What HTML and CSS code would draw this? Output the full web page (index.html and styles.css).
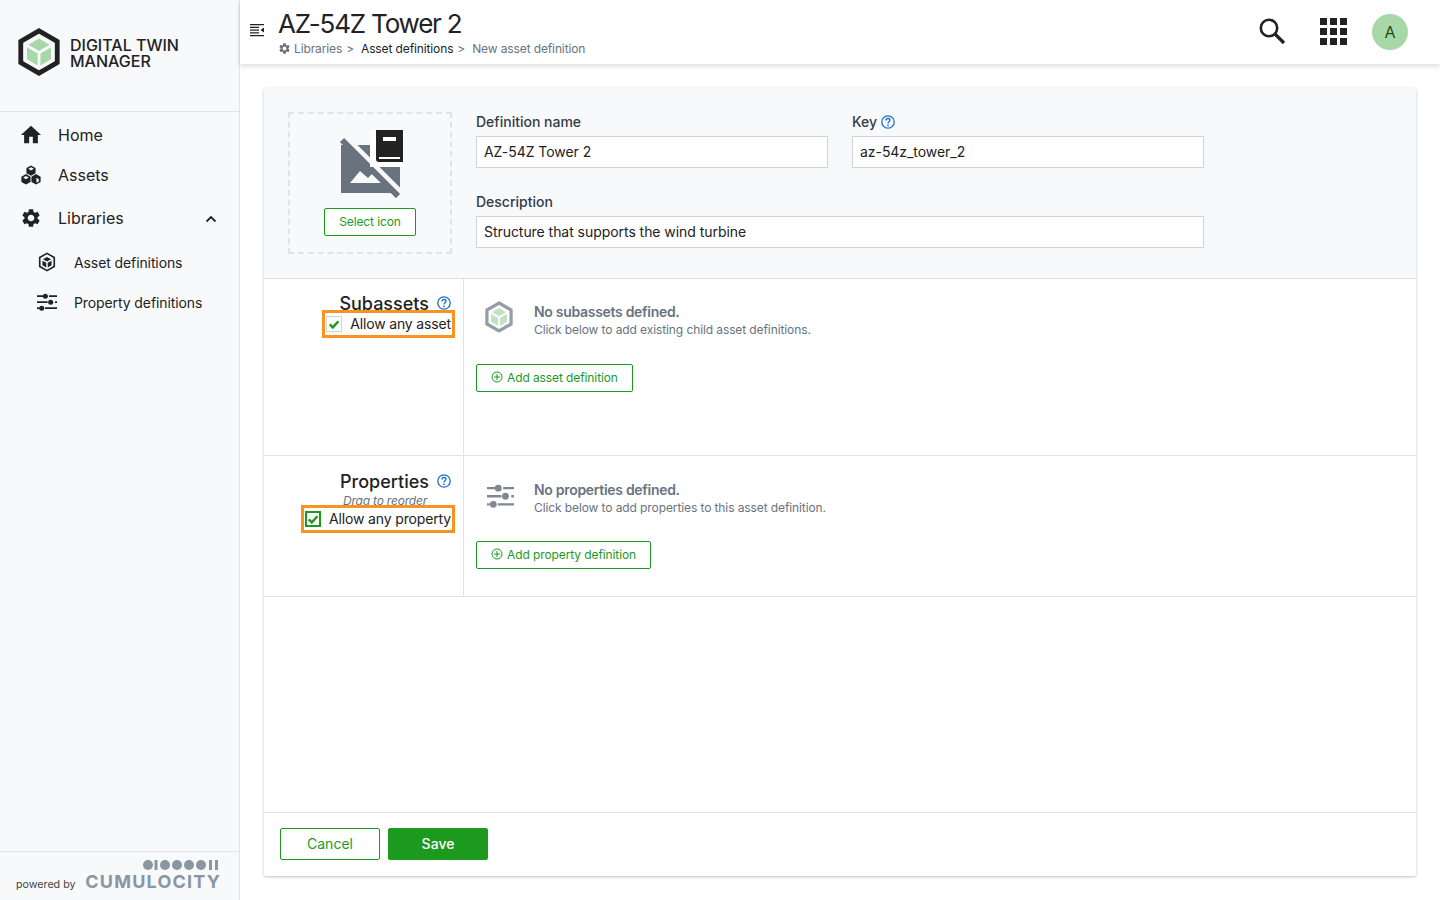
FILE: index.html
```html
<!DOCTYPE html>
<html lang="en">
<head>
    <meta charset="UTF-8">
    <title>New asset definition - Digital Twin Manager</title>
    <link rel="stylesheet" href="styles.css">
</head>
<body>
    <svg class="icon-defs" xmlns="http://www.w3.org/2000/svg">
        <symbol id="i-gear" viewBox="0 0 24 24"><path d="M19.14 12.94c.04-.3.06-.61.06-.94 0-.32-.02-.64-.07-.94l2.03-1.58c.18-.14.23-.41.12-.61l-1.92-3.32c-.12-.22-.37-.29-.59-.22l-2.39.96c-.5-.38-1.03-.7-1.62-.94l-.36-2.54c-.04-.24-.24-.41-.48-.41h-3.84c-.24 0-.43.17-.47.41l-.36 2.54c-.59.24-1.13.57-1.62.94l-2.39-.96c-.22-.08-.47 0-.59.22L2.74 8.87c-.12.21-.08.47.12.61l2.03 1.58c-.05.3-.09.63-.09.94s.02.64.07.94l-2.03 1.58c-.18.14-.23.41-.12.61l1.92 3.32c.12.22.37.29.59.22l2.39-.96c.5.38 1.03.7 1.62.94l.36 2.54c.05.24.24.41.48.41h3.84c.24 0 .44-.17.47-.41l.36-2.54c.59-.24 1.13-.56 1.62-.94l2.39.96c.22.08.47 0 .59-.22l1.92-3.32c.12-.22.07-.47-.12-.61l-2.01-1.58zM12 15.6c-1.98 0-3.6-1.62-3.6-3.6s1.62-3.6 3.6-3.6 3.6 1.62 3.6 3.6-1.62 3.6-3.6 3.6z"/></symbol>
        <symbol id="i-sliders" viewBox="0 0 30 30">
            <path d="M0 5h9v2.600H0zM18 5h12v2.600H18zM0 14h16v2.600H0zM27 14h3v2.600h-3zM0 23h3v2.600H0zM12 23h18v2.600H12z"/>
            <circle cx="12.500" cy="6.300" r="3.800"/><circle cx="20.500" cy="15.300" r="3.800"/><circle cx="7" cy="24.300" r="3.800"/>
        </symbol>
        <symbol id="i-help" viewBox="0 0 14 14">
            <circle cx="7" cy="7" r="6.200" fill="none" stroke="currentColor" stroke-width="1.300"/>
            <path d="M5 5.400C5 4.200 5.900 3.500 7 3.500s2 .7 2 1.800c0 1.500-2 1.600-2 3.100" fill="none" stroke="currentColor" stroke-width="1.300"/>
            <circle cx="7" cy="10.300" r=".9" fill="currentColor"/>
        </symbol>
        <symbol id="i-plus" viewBox="0 0 12 12">
            <circle cx="6" cy="6" r="5" fill="none" stroke="currentColor"/>
            <path d="M6 3v6M3 6h6" fill="none" stroke="currentColor"/>
        </symbol>
        <symbol id="i-check" viewBox="0 0 12 12">
            <path d="M1.800 6.400 4.800 9.400 10.400 3.200" fill="none" stroke="currentColor" stroke-width="2.400"/>
        </symbol>
        <symbol id="i-cube" viewBox="0 0 44 50">
            <path d="M22 3 41 14v22L22 47 3 36V14z" fill="none" stroke="currentColor" stroke-width="5"/>
            <path d="M22 11 33 17.500 22 24 11 17.500z" fill="#a8d8a8"/>
            <path d="M9.500 20 20.500 26.500V39L9.500 32.500z" fill="#a8d8a8"/>
            <path d="M34.500 20V32.500L23.500 39V26.500z" fill="#a8d8a8"/>
        </symbol>
    </svg>

    <div class="app">
        <aside class="sidebar">
            <div class="brand">
                <svg class="brand-logo"><use href="#i-cube"/></svg>
                <div class="brand-name">DIGITAL TWIN<br>MANAGER</div>
            </div>
            <nav class="nav">
                <a class="nav-item">
                    <svg class="nav-icon" viewBox="0 0 24 24"><path d="M10 21v-7h4v7h5.500v-9H23L12 2 1 12h3.500v9z"/></svg>
                    Home
                </a>
                <a class="nav-item">
                    <svg class="nav-icon" viewBox="0 0 24 24">
                        <path d="M12 1.500 17 4.300V10L12 12.800 7 10V4.300z"/>
                        <path d="M6.500 11 11.500 13.800V19.500L6.500 22.300 1.500 19.500V13.800z"/>
                        <path d="M17.500 11 22.500 13.800V19.500L17.500 22.300 12.500 19.500V13.800z"/>
                        <path d="M12 3.500 15 5.200 12 7 9 5.200zM6.500 13 9.500 14.700 6.500 16.500 3.500 14.700zM17.500 15 20.500 16.700V19.200L18 20.500V16.500z" fill="#fff"/>
                    </svg>
                    Assets
                </a>
                <a class="nav-item nav-open">
                    <svg class="nav-icon"><use href="#i-gear"/></svg>
                    Libraries
                    <svg class="nav-caret" viewBox="0 0 12 8"><path d="M1.500 6.500 6 2l4.500 4.500" fill="none" stroke="currentColor" stroke-width="1.800"/></svg>
                </a>
                <a class="nav-sub">
                    <svg class="sub-icon" viewBox="0 0 20 22">
                        <path d="M10 1.500 18 6v10l-8 4.500L2 16V6z" fill="none" stroke="currentColor" stroke-width="1.800"/>
                        <path d="M10 5.500 14.500 8 10 10.500 5.500 8zM5 9.500l4.200 2.300V17L5 14.600zM15 9.500v5.100L10.800 17v-5.200z"/>
                    </svg>
                    Asset definitions
                </a>
                <a class="nav-sub">
                    <svg class="sub-icon"><use href="#i-sliders"/></svg>
                    Property definitions
                </a>
            </nav>
            <div class="powered">
                <span class="powered-by">powered by</span>
                <div class="c8y">
                    <svg class="c8y-dots" viewBox="0 0 78 12">
                        <circle cx="6" cy="6" r="5"/><rect x="12.500" y="1" width="3" height="10"/>
                        <circle cx="23" cy="6" r="5"/><circle cx="35" cy="6" r="5"/><circle cx="47" cy="6" r="5"/><circle cx="59" cy="6" r="5"/>
                        <rect x="67" y="1" width="3" height="10"/><rect x="73" y="1" width="3" height="10"/>
                    </svg>
                    <div class="c8y-name">CUMULOCITY</div>
                </div>
            </div>
        </aside>

        <div class="content">
            <header class="topbar">
                <svg class="toggle" viewBox="0 0 14 14"><path d="M0 1h14v1.200H0zM0 3.800h9V5H0zM0 6.500h9v1.200H0zM0 9.200h9v1.200H0zM0 12h14v1.200H0zM14 4.500v5L10.500 7z"/></svg>
                <div class="title-block">
                    <h1>AZ-54Z Tower 2</h1>
                    <div class="crumbs">
                        <svg class="crumb-gear"><use href="#i-gear"/></svg>
                        <span>Libraries</span><i>&gt;</i>
                        <span class="crumb-dark">Asset definitions</span><i>&gt;</i>
                        <span>New asset definition</span>
                    </div>
                </div>
                <div class="top-actions">
                    <svg class="top-search" viewBox="0 0 28 28"><circle cx="11" cy="11" r="8.200" fill="none" stroke="currentColor" stroke-width="2.600"/><path d="M17 17l9 9" stroke="currentColor" stroke-width="3.200"/></svg>
                    <div class="app-grid"><b></b><b></b><b></b><b></b><b></b><b></b><b></b><b></b><b></b></div>
                    <div class="avatar">A</div>
                </div>
            </header>

            <main class="main">
                <form class="card">
                    <section class="card-head">
                        <div class="icon-box">
                            <svg class="no-image" viewBox="336 128 68 70">
                                <rect x="341" y="145" width="59" height="48" fill="#68737f"/>
                                <path d="M350 183 360 171 368 178 372 174 382 183z" fill="#f8f9fb"/>
                                <path d="M346 137 403 194" stroke="#f8f9fb" stroke-width="5"/>
                                <path d="M342 140 398 196" stroke="#68737f" stroke-width="6"/>
                                <rect x="370" y="130" width="34" height="37" fill="#fff"/>
                                <path d="M376 130h27v32h-24a3 3 0 0 1-3-3z" fill="#222"/>
                                <path d="M383 137h13v4h-13zM379 157h21v2h-21z" fill="#fff"/>
                            </svg>
                            <button type="button" class="btn btn-small btn-icon">Select icon</button>
                        </div>
                        <div class="head-fields">
                            <div class="field">
                                <label>Definition name</label>
                                <input type="text" value="AZ-54Z Tower 2">
                            </div>
                            <div class="field">
                                <label>Key<svg class="help"><use href="#i-help"/></svg></label>
                                <input type="text" value="az-54z_tower_2">
                            </div>
                            <div class="field field-wide">
                                <label>Description</label>
                                <input type="text" value="Structure that supports the wind turbine">
                            </div>
                        </div>
                    </section>

                    <section class="row row-subassets">
                        <div class="row-side">
                            <h2>Subassets<svg class="help"><use href="#i-help"/></svg></h2>
                            <label class="allow allow-asset">
                                <span class="check"><svg><use href="#i-check"/></svg></span>
                                Allow any asset
                            </label>
                        </div>
                        <div class="row-body">
                            <div class="empty">
                                <svg class="empty-icon empty-cube"><use href="#i-cube"/></svg>
                                <div class="empty-copy">
                                    <p class="empty-title">No subassets defined.</p>
                                    <p class="empty-text">Click below to add existing child asset definitions.</p>
                                </div>
                            </div>
                            <button type="button" class="btn btn-small btn-add"><svg><use href="#i-plus"/></svg>Add asset definition</button>
                        </div>
                    </section>

                    <section class="row row-properties">
                        <div class="row-side">
                            <h2>Properties<svg class="help"><use href="#i-help"/></svg></h2>
                            <div class="drag-hint">Drag to reorder</div>
                            <label class="allow allow-property">
                                <span class="check check-on"><svg><use href="#i-check"/></svg></span>
                                Allow any property
                            </label>
                        </div>
                        <div class="row-body">
                            <div class="empty">
                                <svg class="empty-icon empty-sliders"><use href="#i-sliders"/></svg>
                                <div class="empty-copy">
                                    <p class="empty-title">No properties defined.</p>
                                    <p class="empty-text">Click below to add properties to this asset definition.</p>
                                </div>
                            </div>
                            <button type="button" class="btn btn-small btn-add"><svg><use href="#i-plus"/></svg>Add property definition</button>
                        </div>
                    </section>

                    <div class="spacer"></div>

                    <footer class="card-foot">
                        <button type="button" class="btn btn-large">Cancel</button>
                        <button type="button" class="btn btn-large btn-primary">Save</button>
                    </footer>
                </form>
            </main>
        </div>
    </div>
</body>
</html>
```

FILE: styles.css
```css
:root {
    --green: #1c9a1e;
    --ink: #222;
    --slate: #68737f;
    --line: #e1e3e6;
    --panel: #f8f9fb;
    --help: #1a6fc9;
}

* {
    box-sizing: border-box;
}

html,
body {
    height: 100%;
}

body {
    margin: 0;
    background: #fff;
    color: var(--ink);
    font-family: "Inter", "Liberation Sans", sans-serif;
    font-size: 14px;
    overflow: hidden;
}

p,
h1,
h2 {
    margin: 0;
}

.icon-defs {
    display: none;
}

.app {
    display: flex;
    height: 900px;
}

/* Sidebar */
.sidebar {
    width: 240px;
    flex-shrink: 0;
    display: flex;
    flex-direction: column;
    background: var(--panel);
    border-right: 1px solid var(--line);
}

.brand {
    height: 112px;
    flex-shrink: 0;
    display: flex;
    align-items: center;
    gap: 9px;
    padding: 0 0 8px 17px;
    border-bottom: 1px solid var(--line);
}

.brand-logo {
    width: 44px;
    height: 48px;
    color: var(--ink);
}

.brand-name {
    font-size: 16px;
    font-weight: 500;
    line-height: 16px;
    margin-top: 2px;
}

.nav {
    flex: 1;
    display: flex;
    flex-direction: column;
    padding-top: 3px;
}

.nav-item {
    height: 40px;
    display: flex;
    align-items: center;
    gap: 16px;
    padding-left: 20px;
    font-size: 16px;
    color: var(--ink);
}

.nav-open {
    height: 46px;
}

.nav-icon {
    width: 22px;
    height: 22px;
    fill: #222;
}

.nav-caret {
    width: 12px;
    height: 8px;
    margin: 2px 0 0 65px;
}

.nav-sub {
    height: 40px;
    display: flex;
    align-items: center;
    gap: 17px;
    padding: 2px 0 0 37px;
    font-size: 14px;
    letter-spacing: -0.1px;
}

.sub-icon {
    width: 20px;
    height: 20px;
    fill: #222;
    color: #222;
}

.powered {
    height: 49px;
    display: flex;
    align-items: flex-end;
    justify-content: space-between;
    padding: 0 19px 8px 16px;
    border-top: 1px solid var(--line);
}

.powered-by {
    margin-bottom: 1px;
    font-size: 10.7px;
    line-height: 13px;
    color: #444;
    white-space: nowrap;
}

.c8y {
    display: flex;
    flex-direction: column;
    align-items: flex-end;
}

.c8y-dots {
    width: 78px;
    height: 12px;
    margin-bottom: 1px;
    fill: #8a96a1;
}

.c8y-name {
    font-size: 18px;
    font-weight: 700;
    line-height: 20px;
    letter-spacing: 1.2px;
    margin-right: -1px;
    color: #8a96a1;
}

/* Top bar */
.content {
    flex: 1;
    display: flex;
    flex-direction: column;
    min-width: 0;
}

.topbar {
    height: 64px;
    flex-shrink: 0;
    display: flex;
    align-items: flex-start;
    padding-left: 10px;
    background: #fff;
    box-shadow: 0 2px 5px rgba(0, 0, 0, 0.15);
    position: relative;
}

.toggle {
    width: 14px;
    height: 14px;
    margin-top: 23px;
    fill: #222;
}

.title-block {
    margin-left: 14px;
    padding-top: 9px;
}

.title-block h1 {
    font-size: 26px;
    font-weight: 400;
    line-height: 30px;
    letter-spacing: -1.2px;
}

.crumbs {
    display: flex;
    align-items: center;
    height: 18px;
    font-size: 12px;
    letter-spacing: -0.12px;
    color: var(--slate);
}

.crumbs i {
    font-style: normal;
    margin: 0 7px 0 4px;
}

.crumb-gear {
    width: 13px;
    height: 13px;
    margin-right: 3px;
    fill: var(--slate);
}

.crumb-dark {
    color: var(--ink);
}

.top-actions {
    margin-left: auto;
    display: flex;
    align-items: center;
    height: 64px;
    padding-right: 32px;
}

.top-search {
    width: 28px;
    height: 28px;
    margin-bottom: 2px;
    color: #222;
}

.app-grid {
    display: grid;
    grid-template-columns: repeat(3, 7px);
    grid-auto-rows: 7px;
    gap: 3px;
    margin: 0 0 2px 34px;
}

.app-grid b {
    background: #222;
}

.avatar {
    width: 36px;
    height: 36px;
    margin-left: 25px;
    border-radius: 50%;
    background: #a8d8a8;
    color: #14501a;
    font-size: 16px;
    line-height: 36px;
    text-align: center;
}

/* Card */
.main {
    flex: 1;
    display: flex;
    padding: 24px;
    min-height: 0;
}

.card {
    flex: 1;
    display: flex;
    flex-direction: column;
    border-radius: 2px;
    box-shadow: 0 1px 3px rgba(0, 0, 0, 0.25);
}

.card-head {
    height: 191px;
    flex-shrink: 0;
    display: flex;
    gap: 24px;
    padding: 24px;
    background: var(--panel);
    border-bottom: 1px solid var(--line);
}

.icon-box {
    width: 164px;
    height: 142px;
    flex-shrink: 0;
    display: flex;
    flex-direction: column;
    align-items: center;
    border: 2px dashed var(--line);
    padding-top: 14px;
}

.no-image {
    width: 68px;
    height: 70px;
    margin-bottom: 10px;
}

.head-fields {
    display: grid;
    grid-template-columns: 352px 352px;
    gap: 24px;
    align-content: start;
}

.field label {
    display: block;
    height: 24px;
    font-size: 14px;
    font-weight: 500;
    line-height: 20px;
    color: #333c47;
}

.field input {
    display: block;
    width: 100%;
    height: 32px;
    padding: 0 7px 2px;
    border: 1px solid #d0d4d9;
    background: #fff;
    color: var(--ink);
    font: inherit;
    letter-spacing: -0.05px;
}

.field-wide {
    grid-column: 1 / 3;
}

.help {
    width: 14px;
    height: 14px;
    margin-left: 4px;
    color: var(--help);
    vertical-align: -2px;
}

.btn {
    display: flex;
    align-items: center;
    justify-content: center;
    background: #fff;
    border: 1px solid var(--green);
    border-radius: 2px;
    color: var(--green);
    font-family: inherit;
}

.btn-small {
    height: 28px;
    padding: 0 14px 2px;
    font-size: 12px;
    letter-spacing: -0.1px;
}

.btn-icon {
    width: 92px;
    padding: 0 0 1px;
}

.btn-add svg {
    width: 12px;
    height: 12px;
    margin-right: 4px;
}

.btn-large {
    width: 100px;
    height: 32px;
    font-size: 14px;
}

.btn-primary {
    background: var(--green);
    color: #fff;
    font-weight: 500;
}

/* Subassets and properties */
.row {
    flex-shrink: 0;
    display: flex;
    border-bottom: 1px solid var(--line);
}

.row-subassets {
    height: 177px;
}

.row-properties {
    height: 141px;
}

.row-side {
    width: 200px;
    flex-shrink: 0;
    display: flex;
    flex-direction: column;
    align-items: flex-end;
    padding: 14px 8px 0 0;
    border-right: 1px solid var(--line);
}

.row-side h2 {
    margin-right: 4px;
    font-size: 18px;
    font-weight: 500;
    line-height: 22px;
}

.row-side h2 .help {
    margin-left: 8px;
    vertical-align: 0;
}

.row-properties .row-side {
    padding-top: 15px;
}

.drag-hint {
    align-self: stretch;
    margin-top: 2px;
    padding-right: 28px;
    text-align: right;
    font-size: 12px;
    font-style: italic;
    line-height: 12px;
    letter-spacing: -0.2px;
    color: var(--slate);
}

.allow {
    display: flex;
    align-items: center;
    height: 28px;
    border: 3px solid #f7931e;
    padding: 0 1px 1px;
    font-size: 14px;
    letter-spacing: -0.15px;
}

.allow-asset {
    margin-top: -5px;
    gap: 8px;
}

.allow-property {
    margin-top: -2px;
    gap: 8px;
}

.check {
    width: 16px;
    height: 16px;
    display: flex;
    align-items: center;
    justify-content: center;
    border: 1px solid #d0d4d9;
    color: var(--green);
}

.check svg {
    width: 12px;
    height: 12px;
}

.check-on {
    border: 2px solid var(--green);
}

.row-body {
    padding: 20px 12px 0;
}

.row-properties .row-body {
    padding-top: 22px;
}

.empty {
    display: flex;
    align-items: center;
    gap: 21px;
    height: 36px;
    margin-bottom: 29px;
    padding-left: 9px;
}

.row-properties .empty {
    margin-bottom: 27px;
}

.empty-copy {
    padding-top: 6px;
}

.row-properties .empty-copy {
    padding-top: 4px;
}

.empty-icon {
    width: 28px;
    height: 32px;
    fill: var(--slate);
    color: var(--slate);
}

.empty-cube {
    opacity: 0.7;
}

.empty-sliders {
    width: 27px;
    margin-left: 2px;
    margin-right: -1px;
    opacity: 0.85;
}

.empty-title {
    font-size: 14px;
    font-weight: 600;
    line-height: 20px;
    letter-spacing: -0.3px;
    color: var(--slate);
}

.empty-text {
    font-size: 12px;
    line-height: 16px;
    letter-spacing: -0.1px;
    color: var(--slate);
}

.spacer {
    flex: 1;
}

.card-foot {
    height: 64px;
    flex-shrink: 0;
    display: flex;
    align-items: center;
    gap: 8px;
    padding: 0 16px 2px;
    border-top: 1px solid var(--line);
}
```
